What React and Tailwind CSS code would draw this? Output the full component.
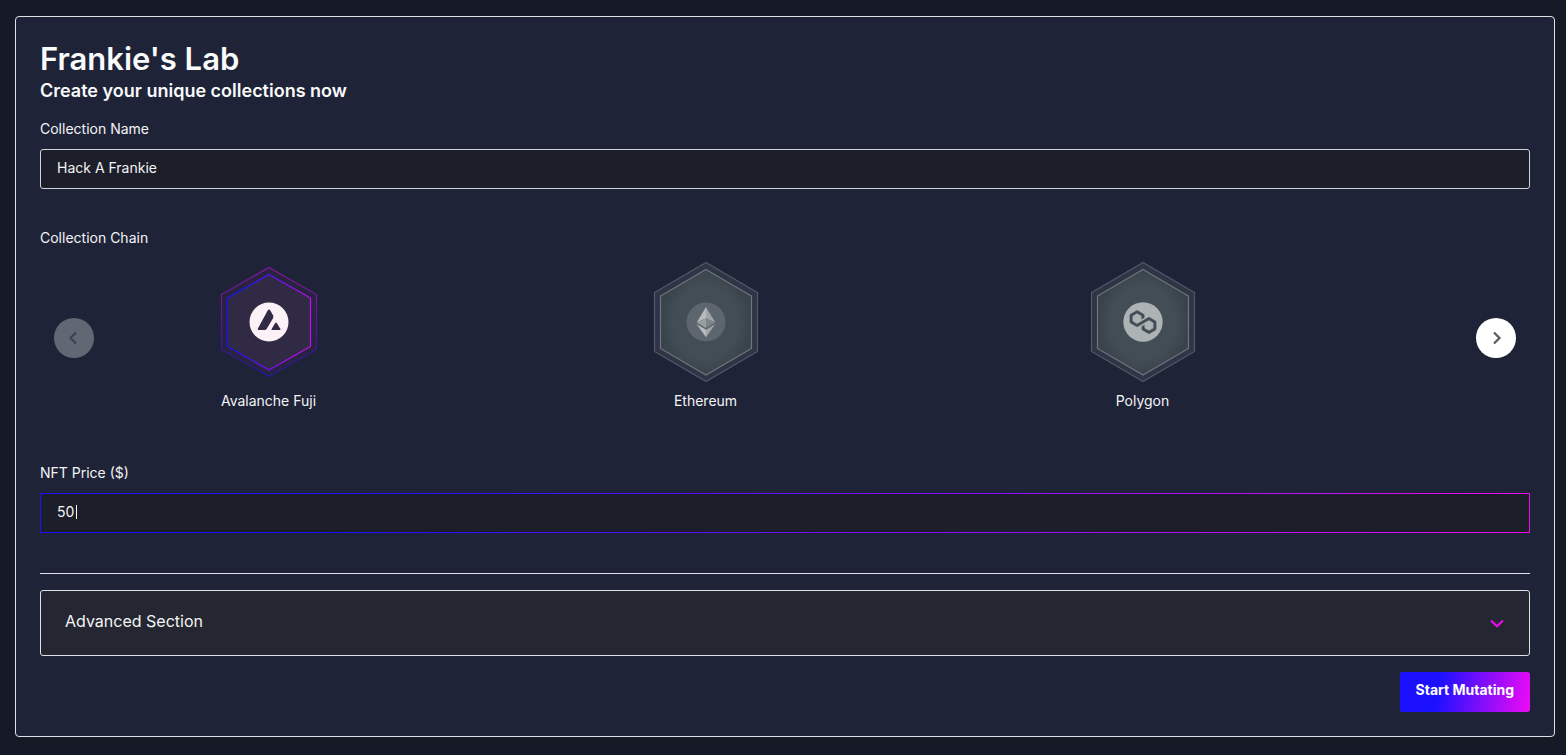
import { useState } from 'react';

const HEX_LARGE = {
    outer: '60,0.5 111.5,30.5 111.5,89.5 60,119.5 8.5,89.5 8.5,30.5',
    inner: '60,7.5 105.5,34 105.5,86.5 60,113 14.5,86.5 14.5,34',
};

const HEX_SMALL = {
    outer: '60,5.5 107.5,32.5 107.5,87.5 60,114.5 12.5,87.5 12.5,32.5',
    inner: '60,12.5 101.5,36 101.5,84.5 60,108 18.5,84.5 18.5,36',
};

const AvalancheMark = () => (
    <g>
        <circle cx="60" cy="60" r="19.5" fill="#fcf1f7" />
        <path
            d="M58.7 48.6Q60 46.4 61.3 48.6L64 53.2Q64.8 54.7 64 56.2L57.6 67Q56.8 68 55.4 68H49.6Q48.2 68 48.9 66.6Z"
            fill="#312a45"
        />
        <path d="M66.1 61.2Q67 59.7 67.9 61.2L71.4 67Q71.9 68 70.8 68H63.2Q62.1 68 62.6 67Z" fill="#312a45" />
    </g>
);

const EthereumMark = () => (
    <g>
        <circle cx="60" cy="60" r="19.5" fill="#5d666e" />
        <path d="M60 45L50.7 60.5L60 56.3Z" fill="#b9bcbe" />
        <path d="M60 45L69.3 60.5L60 56.3Z" fill="#a0a5a8" />
        <path d="M50.7 60.5L60 56.3V66Z" fill="#979da0" />
        <path d="M69.3 60.5L60 56.3V66Z" fill="#7c8489" />
        <path d="M50.7 62.2L60 67.7V75.3Z" fill="#b9bcbe" />
        <path d="M69.3 62.2L60 67.7V75.3Z" fill="#a0a5a8" />
    </g>
);

const PolygonMark = () => (
    <g>
        <circle cx="60" cy="60" r="19.7" fill="#adb2b5" />
        <path
            transform="translate(46.8 48.5) scale(0.69)"
            d="M29 10.2c-.7-.4-1.6-.4-2.4 0L21 13.5l-3.8 2.1-5.5 3.3c-.7.4-1.6.4-2.4 0L5 16.3c-.7-.4-1.2-1.2-1.2-2.1v-5c0-.8.4-1.6 1.2-2.1l4.3-2.5c.7-.4 1.6-.4 2.4 0L16 7.2c.7.4 1.2 1.2 1.2 2.1v3.3l3.8-2.2V7c0-.8-.4-1.6-1.2-2.1l-8-4.7c-.7-.4-1.6-.4-2.4 0L1.2 5C.4 5.4 0 6.2 0 7v9.4c0 .8.4 1.6 1.2 2.1l8.1 4.7c.7.4 1.6.4 2.4 0l5.5-3.2 3.8-2.2 5.5-3.2c.7-.4 1.6-.4 2.4 0l4.3 2.5c.7.4 1.2 1.2 1.2 2.1v5c0 .8-.4 1.6-1.2 2.1L29 28.8c-.7.4-1.6.4-2.4 0l-4.3-2.5c-.7-.4-1.2-1.2-1.2-2.1V21l-3.8 2.2v3.3c0 .8.4 1.6 1.2 2.1l8.1 4.7c.7.4 1.6.4 2.4 0l8.1-4.7c.7-.4 1.2-1.2 1.2-2.1V17c0-.8-.4-1.6-1.2-2.1L29 10.2z"
            fill="#424d56"
            stroke="#424d56"
            strokeWidth="0.4"
        />
    </g>
);

const CHAINS = [
    { id: 'fuji', name: 'Avalanche Fuji', Mark: AvalancheMark },
    { id: 'ethereum', name: 'Ethereum', Mark: EthereumMark },
    { id: 'polygon', name: 'Polygon', Mark: PolygonMark },
];

const ChainHexagon = ({ active, children }) => {
    const hex = active ? HEX_SMALL : HEX_LARGE;
    return (
        <svg className="w-[120px] h-[120px]" viewBox="0 0 120 120" fill="none" aria-hidden="true">
            <defs>
                <linearGradient id="ringOuter" x1="0" y1="0" x2="0" y2="1">
                    <stop offset="0" stopColor="#8a159c" />
                    <stop offset="0.3" stopColor="#721696" />
                    <stop offset="0.8" stopColor="#33198f" />
                    <stop offset="1" stopColor="#211a94" />
                </linearGradient>
                <linearGradient id="ringInner" x1="0" y1="0" x2="1" y2="0.15">
                    <stop offset="0.2" stopColor="#1c12ff" />
                    <stop offset="1" stopColor="#c80cf5" />
                </linearGradient>
                <radialGradient id="plate">
                    <stop offset="0.7" stopColor="#424d56" />
                    <stop offset="1" stopColor="#39434c" />
                </radialGradient>
            </defs>
            <polygon
                points={hex.outer}
                fill={active ? '#282340' : '#2f3546'}
                stroke={active ? 'url(#ringOuter)' : '#545963'}
                strokeWidth="1.2"
            />
            <polygon
                points={hex.inner}
                fill={active ? '#312a45' : 'url(#plate)'}
                stroke={active ? 'url(#ringInner)' : '#70757a'}
                strokeWidth="1.2"
            />
            {children}
        </svg>
    );
};

const App = () => {
    const [name, setName] = useState('Hack A Frankie');
    const [price, setPrice] = useState('50');
    const [chain, setChain] = useState('fuji');

    return (
        <div className="min-h-screen bg-[#161926] pt-4 pb-[18px] pl-[15px] pr-[11px] font-['Inter',sans-serif] text-sm text-[#f3f4f6]">
            <main className="rounded border border-[#dfe1e6] bg-[#1e2337] p-6">
                <h1 className="text-[31px] leading-9 font-semibold text-[#f9fafb]">Frankie's Lab</h1>
                <h2 className="text-lg leading-7 font-semibold text-[#f9fafb]">Create your unique collections now</h2>

                <label htmlFor="name" className="mt-3 block leading-6">Collection Name</label>
                <input
                    id="name"
                    className="mt-2 block h-10 w-full rounded-[3px] border border-[#cfd3dc] bg-[#1c1f29] px-4 pb-1 outline-none"
                    value={name}
                    onChange={(e) => setName(e.target.value)}
                />

                <h3 className="mt-[37px] leading-6">Collection Chain</h3>
                <div className="relative mt-3">
                    <div className="grid grid-cols-3 pl-[10px] pr-[169px]">
                        {CHAINS.map(({ id, name: label, Mark }) => (
                            <button
                                key={id}
                                type="button"
                                aria-pressed={chain === id}
                                onClick={() => setChain(id)}
                                className="flex flex-col items-center gap-2"
                            >
                                <ChainHexagon active={chain === id}>
                                    <Mark />
                                </ChainHexagon>
                                <span className="leading-[22px]">{label}</span>
                            </button>
                        ))}
                    </div>
                    <button
                        type="button"
                        disabled
                        aria-label="Previous chains"
                        className="absolute top-14 left-[14px] flex size-10 items-center justify-center rounded-full bg-[#626873] text-[#3d4350]"
                    >
                        <svg className="size-5" viewBox="0 0 20 20" fill="none" stroke="currentColor" strokeWidth="2.2">
                            <path d="M12 4.5L6.5 10l5.5 5.5" />
                        </svg>
                    </button>
                    <button
                        type="button"
                        aria-label="Next chains"
                        className="absolute top-14 right-[14px] flex size-10 items-center justify-center rounded-full bg-white text-[#575c62]"
                    >
                        <svg className="size-5" viewBox="0 0 20 20" fill="none" stroke="currentColor" strokeWidth="2.2">
                            <path d="M8 4.5l5.5 5.5L8 15.5" />
                        </svg>
                    </button>
                </div>

                <label htmlFor="price" className="mt-[49px] block leading-6">NFT Price ($)</label>
                <div className="relative mt-2 bg-[linear-gradient(100deg,#1b11ff_20%,#f00af5_100%)] p-px">
                    <input
                        id="price"
                        className="block h-[38px] w-full bg-[#1c1f29] px-4 pb-1 caret-transparent outline-none"
                        value={price}
                        onChange={(e) => setPrice(e.target.value)}
                    />
                    {/* text cursor */}
                    <span className="absolute top-3 left-9 h-[14px] w-px bg-white" aria-hidden="true" />
                </div>

                <hr className="mt-10 border-[#dfe1e6]" />

                <button
                    type="button"
                    aria-expanded="false"
                    className="mt-4 flex h-[66px] w-full items-center justify-between rounded-[3px] border border-[#dfe1e6] bg-[#242731] px-6 text-base"
                >
                    <span className="pb-1">Advanced Section</span>
                    <svg className="h-4 w-4" viewBox="0 0 16 16" fill="none" stroke="#f00af0" strokeWidth="2" aria-hidden="true">
                        <path d="M2 5.5L8 11.3L14 5.5" />
                    </svg>
                </button>

                <div className="mt-4 flex justify-end">
                    <button
                        type="button"
                        className="h-10 rounded-[3px] bg-[linear-gradient(100deg,#1b11ff_30%,#f00af5_100%)] px-4 pb-1 font-bold text-white"
                    >
                        Start Mutating
                    </button>
                </div>
            </main>
        </div>
    );
};

export default App;
